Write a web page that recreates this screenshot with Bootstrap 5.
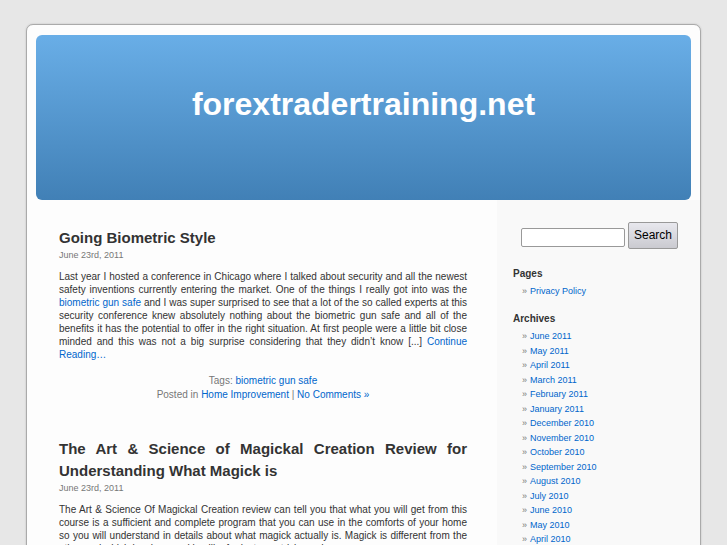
<!DOCTYPE html>
<html lang="en">
<head>
<meta charset="utf-8">
<meta name="viewport" content="width=device-width, initial-scale=1">
<title>forextradertraining.net</title>
<link rel="stylesheet" href="https://cdn.jsdelivr.net/npm/bootstrap@5.3.0/dist/css/bootstrap.min.css">
<style>
body { background: #e7e7e7; color: #333; font: 10px/13px "Liberation Sans", Arial, sans-serif; height: 100vh; overflow: hidden; }
a { color: #06c; text-decoration: none; }
a:hover { text-decoration: underline; }
.page-frame { margin: 24px 26px 0; padding: 10px 9px 0; background: #fdfdfd; border: 1px solid #aaa; border-radius: 7px; box-shadow: 0 0 2px #bbb; }
.masthead { height: 165px; padding-bottom: 28px; border-radius: 6px; background: linear-gradient(#69aee7, #4180b6); }
.masthead h1 { font-size: 32px; line-height: 40px; font-weight: 700; }
.masthead a { color: #fff; }
.posts { min-width: 0; padding: 27px 30px 0 23px; text-align: justify; }
.posts h2 { font-size: 15px; line-height: 22px; font-weight: 700; margin: 0; }
.posts time { display: block; font-size: 9px; line-height: 12px; color: #777; margin-bottom: 9px; }
.posts p { margin: 0 0 13px; }
.posts footer { text-align: center; line-height: 14px; color: #777; margin-bottom: 36px; }
.side { flex: 0 0 203px; min-width: 0; margin-right: -9px; padding: 22px 22px 0 16px; background: #f9f9f9; }
.side form { gap: 3px; padding-left: 8px; margin-bottom: 18px; }
.side input { min-width: 0; height: 19px; margin-top: 4px; border: 1px solid #999; border-radius: 2px; background: #fff; }
.side button { height: 27px; padding: 0 5px; font-size: 12px; color: #000; border: 1px solid #999; border-radius: 2px; background: linear-gradient(#e8e8ee, #cacad0); }
.side h2 { font-size: 10px; line-height: 13px; font-weight: 700; margin: 0 0 4px; }
.side ul { display: grid; grid-auto-rows: 15px 14px; margin: 0 0 13px; padding: 0 0 0 9px; list-style: none; font-size: 9px; line-height: 15px; }
.side li::before { content: "\00BB"; color: #777; margin-right: 3px; }
</style>
<script src="https://cdn.jsdelivr.net/npm/bootstrap@5.3.0/dist/js/bootstrap.bundle.min.js"></script>
</head>
<body>
<div class="page-frame">
  <header class="masthead d-flex align-items-center justify-content-center">
    <h1 class="m-0"><a href="#">forextradertraining.net</a></h1>
  </header>
  <div class="d-flex">
    <main class="posts flex-fill">
      <article>
        <h2>Going Biometric Style</h2>
        <time datetime="2011-06-23">June 23rd, 2011</time>
        <p>Last year I hosted a conference in Chicago where I talked about security and all the newest safety inventions currently entering the market. One of the things I really got into was the <a href="#">biometric gun safe</a> and I was super surprised to see that a lot of the so called experts at this security conference knew absolutely nothing about the biometric gun safe and all of the benefits it has the potential to offer in the right situation. At first people were a little bit close minded and this was not a big surprise considering that they didn’t know [...] <a href="#">Continue Reading…</a></p>
        <footer>Tags: <a href="#">biometric gun safe</a><br>Posted in <a href="#">Home Improvement</a> | <a href="#">No Comments »</a></footer>
      </article>
      <article>
        <h2>The Art &amp; Science of Magickal Creation Review for Understanding What Magick is</h2>
        <time datetime="2011-06-23">June 23rd, 2011</time>
        <p>The Art &amp; Science Of Magickal Creation review can tell you that what you will get from this course is a sufficient and complete program that you can use in the comforts of your home so you will understand in details about what magick actually is. Magick is different from the other and which involves working like for instance tricks and</p>
      </article>
    </main>
    <aside class="side">
      <form class="d-flex align-items-center" role="search">
        <input class="w-100" type="text" aria-label="Search for">
        <button type="submit">Search</button>
      </form>
      <h2>Pages</h2>
      <ul><li><a href="#">Privacy Policy</a></li></ul>
      <h2>Archives</h2>
      <ul>
        <li><a href="#">June 2011</a></li>
        <li><a href="#">May 2011</a></li>
        <li><a href="#">April 2011</a></li>
        <li><a href="#">March 2011</a></li>
        <li><a href="#">February 2011</a></li>
        <li><a href="#">January 2011</a></li>
        <li><a href="#">December 2010</a></li>
        <li><a href="#">November 2010</a></li>
        <li><a href="#">October 2010</a></li>
        <li><a href="#">September 2010</a></li>
        <li><a href="#">August 2010</a></li>
        <li><a href="#">July 2010</a></li>
        <li><a href="#">June 2010</a></li>
        <li><a href="#">May 2010</a></li>
        <li><a href="#">April 2010</a></li>
      </ul>
    </aside>
  </div>
</div>
</body>
</html>
